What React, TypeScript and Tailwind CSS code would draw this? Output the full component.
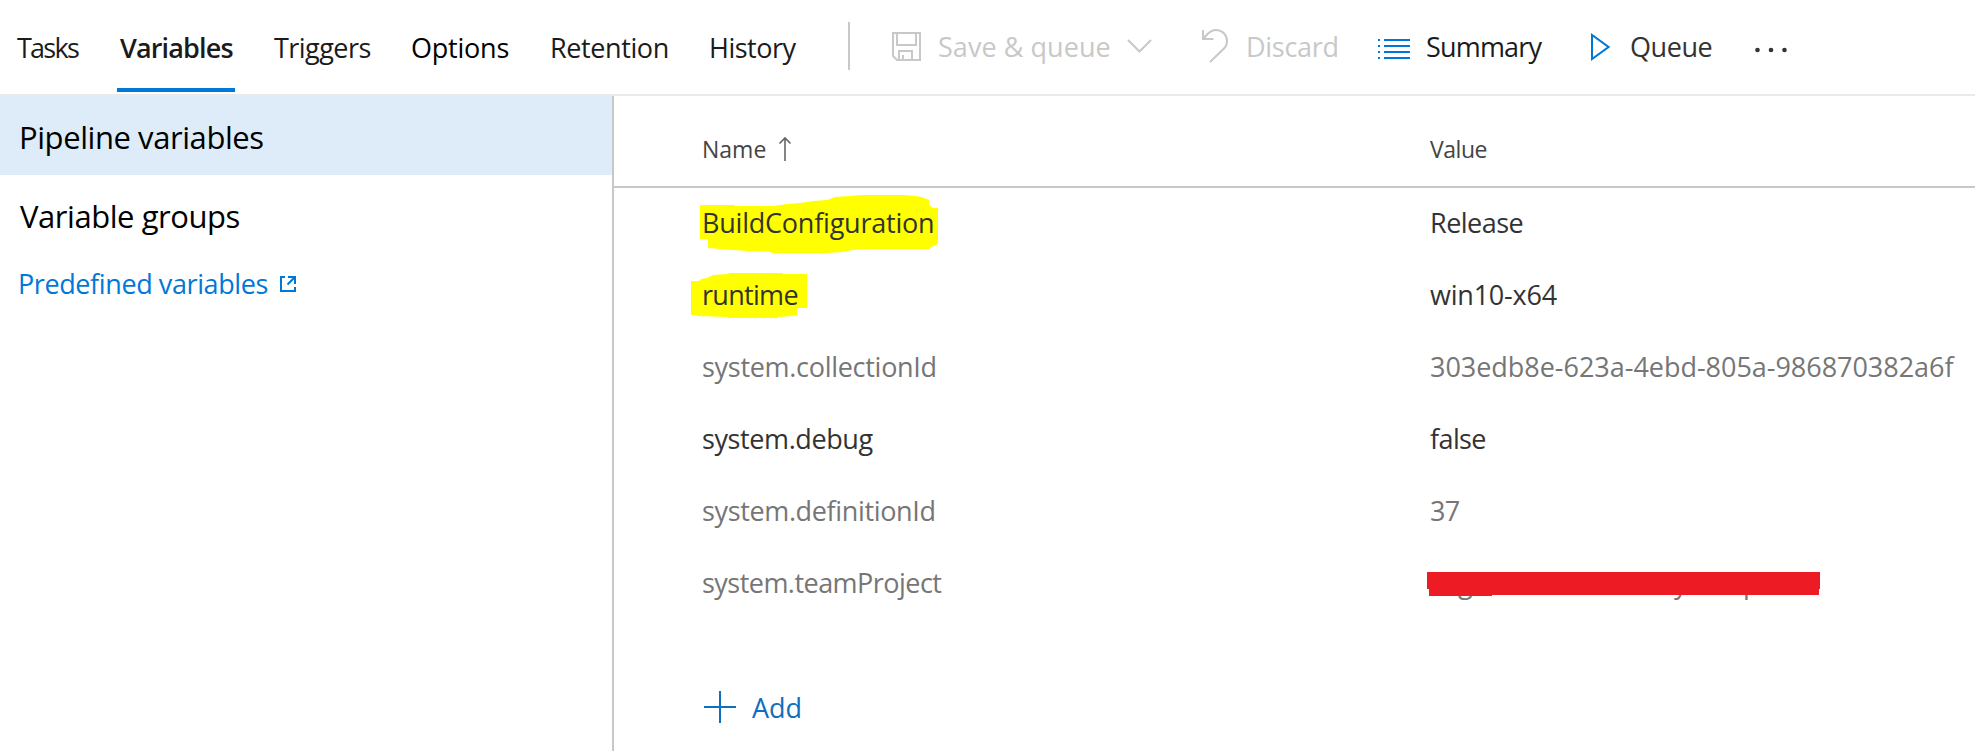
import type { ReactNode } from "react";

type Tab = { label: string; box: string; text: string; active?: boolean };

const tabs: Tab[] = [
  { label: "Tasks", box: "w-[101px] pl-px", text: "tracking-[-1.75px]" },
  { label: "Variables", box: "w-[118px] pl-[3px] mr-[39px]", text: "tracking-[-0.85px] font-semibold", active: true },
  { label: "Triggers", box: "w-[137px]", text: "tracking-[-0.54px]" },
  { label: "Options", box: "w-[139px]", text: "tracking-[-0.23px] text-black" },
  { label: "Retention", box: "w-[159px]", text: "tracking-[-0.4px]" },
  { label: "History", box: "w-[139px]", text: "tracking-[-0.5px]" },
];

type Row = { name: string; nameCls: string; value: ReactNode; valueCls: string; muted?: boolean; mark?: ReactNode };

const BuildMark = () => (
  <svg className="absolute -left-[2px] top-[7px]" width="238" height="58" fill="#ffff00">
    <path d="M0 10H35V11H74L87 9L100 8L113 6L127 5L135 2L150 1L162 0H205L215 1L222 2L229 5V9L232 13H238V49L233 51L229 54H170L152 55L143 57L126 58H71V57L48 56L32 55L20 54L8 53V44H0Z" />
  </svg>
);

const RuntimeMark = () => (
  <svg className="absolute -left-[11px] top-[13px]" width="116" height="45" fill="#ffff00">
    <path d="M0 8H8L10 6L16 5L22 2L36 1L39 0H92V1H116V35H106V42L101 43L87 44V45H37V44L6 43V42H0Z" />
  </svg>
);

const RedactedValue = () => (
  <span className="relative block h-[60px] w-[400px]">
    <span className="flex pl-[28px]">
      <span className="w-[216px]">g</span>
      <span className="w-[69px]">y</span>
      <span>p</span>
    </span>
    <svg className="absolute -left-[3px] top-[24px]" width="393" height="24" fill="#ed1c24">
      <path d="M0 0H393V17H392V23H65V24H2V17H0Z" />
    </svg>
  </span>
);

const rows: Row[] = [
  { name: "BuildConfiguration", nameCls: "tracking-[-0.22px]", value: "Release", valueCls: "tracking-[-0.53px]", mark: <BuildMark /> },
  { name: "runtime", nameCls: "tracking-[-0.7px]", value: "win10-x64", valueCls: "tracking-[-0.22px]", mark: <RuntimeMark /> },
  { name: "system.collectionId", nameCls: "tracking-[-0.29px]", value: "303edb8e-623a-4ebd-805a-986870382a6f", valueCls: "tracking-[-0.03px]", muted: true },
  { name: "system.debug", nameCls: "tracking-[-0.4px]", value: "false", valueCls: "tracking-[-0.6px]" },
  { name: "system.definitionId", nameCls: "tracking-[-0.36px]", value: "37", valueCls: "tracking-[-0.7px]", muted: true },
  { name: "system.teamProject", nameCls: "tracking-[-0.53px]", value: <RedactedValue />, valueCls: "", muted: true },
];

function Header() {
  return (
    <header className="flex h-24 shrink-0 items-stretch border-b-2 border-[#eaeaea] pl-4 text-[27px] leading-[60px]">
      <nav className="flex text-[#1b1b1b]">
        {tabs.map((t) => (
          <div key={t.label} className={`relative flex items-center pt-px ${t.box}`}>
            <span className={t.text}>{t.label}</span>
            {t.active && <span className="absolute bottom-[2px] left-0 h-1 w-full bg-[#0078d7]" />}
          </div>
        ))}
      </nav>
      <div className="mt-[22px] h-12 w-[2px] bg-[#c8c8c8]" />
      <div className="flex items-center pb-px">
        <div className="flex w-[310px] items-center pl-[42px] text-[#c8c8c8]">
          <svg className="shrink-0" width="30" height="30" fill="none" stroke="currentColor" strokeWidth="2">
            <path d="M1 1H28V28H5L1 24ZM5 1V13H24V1M7 28V19H20V28M11 28V23" />
          </svg>
          <span className="w-[205px] shrink-0 pl-[16px] tracking-[0.05px]">Save &amp; queue</span>
          <svg className="mb-[2px] shrink-0" width="25" height="14" fill="none" stroke="currentColor" strokeWidth="2">
            <path d="M1 1L12.500 12.500L24 1" />
          </svg>
        </div>
        <div className="flex w-[217px] items-center pl-[42px] text-[#c8c8c8]">
          <svg className="mb-[2px] shrink-0" width="26" height="34" fill="none" stroke="currentColor" strokeWidth="2">
            <path d="M1 1V10H11.500M1.500 9.500L6 4.500C9 1.500 11 1 14 1C20.500 1 25 6 25 12C25 15 24 17.500 22 19.500L8 33" />
          </svg>
          <span className="pl-[18px] tracking-[-0.28px]">Discard</span>
        </div>
        <div className="flex w-[213px] items-center">
          <svg width="34" height="22" className="mt-[5px] shrink-0" fill="#0078d7">
            <path d="M7 1H33V3H7ZM7 7H33V9H7ZM7 13H33V15H7ZM7 19H33V21H7ZM1 1H3V3H1ZM1 7H3V9H1ZM1 13H3V15H1ZM1 19H3V21H1Z" />
          </svg>
          <span className="pl-[15px] tracking-[-0.82px] text-[#1b1b1b]">Summary</span>
        </div>
        <div className="flex w-[164px] items-center">
          <svg width="20" height="28" className="shrink-0" fill="none" stroke="#0078d7" strokeWidth="2">
            <path d="M2 2V26L18.500 14Z" />
          </svg>
          <span className="pl-[20px] tracking-[-0.43px] text-[#333]">Queue</span>
        </div>
        <svg width="34" height="6" className="mt-[7px]" fill="#333">
          <circle cx="3.500" cy="3" r="2.300" />
          <circle cx="17" cy="3" r="2.300" />
          <circle cx="30.500" cy="3" r="2.300" />
        </svg>
      </div>
    </header>
  );
}

function Sidebar() {
  return (
    <aside className="w-[614px] shrink-0 border-r-2 border-[#c8c8c8] text-[31px] text-black">
      <div className="flex h-[79px] items-center bg-[#deecf9] pt-[3px] pl-[19px] tracking-[-0.43px]">Pipeline variables</div>
      <div className="flex h-[79px] items-center pt-[3px] pl-[20px] tracking-[-0.45px]">Variable groups</div>
      <a className="flex h-[60px] items-center pl-[18px] text-[27px] tracking-[-0.4px] text-[#0078d7]">
        <span className="w-[261px]">Predefined variables</span>
        <svg width="18" height="18" fill="none" stroke="currentColor" strokeWidth="2">
          <path d="M6 2H2V16H16V12M9 2H16V9M16 2L8.500 9.500" />
        </svg>
      </a>
    </aside>
  );
}

function VariablesTable() {
  return (
    <main className="flex-1">
      <div className="flex h-[92px] border-b-2 border-[#c8c8c8] pt-4 pl-[88px] text-[23px] text-[#444]">
        <div className="flex w-[728px] items-center">
          <span className="w-[76px]">Name</span>
          <svg width="14" height="26" fill="none" stroke="#666" strokeWidth="1.600">
            <path d="M7 25V2M1.500 7.500L7 2L12.500 7.500" />
          </svg>
        </div>
        <div className="flex items-center tracking-[-0.45px]">Value</div>
      </div>
      {rows.map((r) => (
        <div key={r.name} className={`flex h-[72px] pl-[88px] text-[27px] leading-[69px] ${r.muted ? "text-[#767676]" : "text-[#333]"}`}>
          <div className="relative w-[728px]">
            {r.mark}
            <span className={`relative ${r.nameCls}`}>{r.name}</span>
          </div>
          <div className={r.valueCls}>{r.value}</div>
        </div>
      ))}
      <button className="mt-[67px] ml-[90px] flex h-10 items-center text-[27px] text-[#106ebe]">
        <svg width="32" height="32" fill="none" stroke="currentColor" strokeWidth="2">
          <path d="M16 0V32M0 16H32" />
        </svg>
        <span className="pt-[2px] pl-[16px]">Add</span>
      </button>
    </main>
  );
}

export default function App() {
  return (
    <div className="flex h-[751px] w-[1975px] flex-col overflow-hidden bg-white font-['Open_Sans','Noto_Sans',sans-serif] whitespace-nowrap">
      <Header />
      <div className="flex flex-1">
        <Sidebar />
        <VariablesTable />
      </div>
    </div>
  );
}
